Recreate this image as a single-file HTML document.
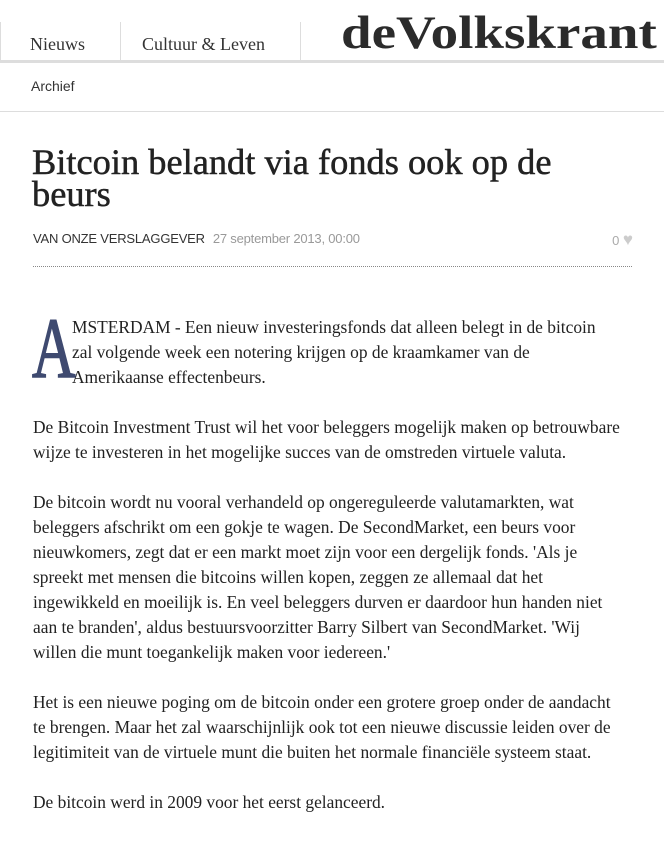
<!DOCTYPE html>
<html><head><meta charset="utf-8"><style>
*{margin:0;padding:0;box-sizing:border-box}
body{width:664px;height:866px;background:#fff;font-family:"Liberation Serif",serif;color:#222;position:relative;overflow:hidden}
.nav{position:absolute;top:22px;left:0;width:664px;height:41px;border-bottom:3px solid #ddd}
.nav .item{position:absolute;top:0;height:38px;border-left:1px solid #ddd;font-size:18px;line-height:44px;color:#333}
.logo{position:absolute;left:341px;top:-9px;font-size:47px;font-weight:bold;color:#2b2b2b;line-height:40px;white-space:nowrap;transform-origin:0 0;transform:scaleX(1.17)}
.sub{position:absolute;top:63px;left:0;width:664px;height:49px;border-bottom:1px solid #ddd;font-family:"Liberation Sans",sans-serif;font-size:14px;color:#333;padding-left:31px;line-height:46px}
h1{position:absolute;left:32px;top:146px;font-size:36.4px;font-weight:normal;line-height:32px;color:#222;-webkit-text-stroke:.5px #222;white-space:nowrap}
.by{position:absolute;left:33px;top:231px;font-family:"Liberation Sans",sans-serif;font-size:13px;color:#333;white-space:nowrap;letter-spacing:-.2px}
.by span{color:#999;margin-left:8px}
.likes{position:absolute;right:31px;top:230px;font-family:"Liberation Sans",sans-serif;font-size:13px;color:#aaa}
.dots{position:absolute;left:33px;top:266px;width:599px;border-top:1px dotted #888}
.body{position:absolute;left:33px;top:315px;font-size:17.4px;line-height:25px;color:#222;white-space:nowrap}
.body p{margin-bottom:25px}
.cap{position:absolute;left:-1px;top:-2px;font-size:86px;line-height:70px;color:#3f4a70;transform-origin:0 0;transform:scaleX(0.7);-webkit-text-stroke:1.5px #3f4a70}
</style></head><body>
<div class="nav">
<div class="item" style="left:0;width:120px;padding-left:29px">Nieuws</div>
<div class="item" style="left:120px;width:116px;padding-left:21px;white-space:nowrap">Cultuur &amp; Leven</div>
<div class="item" style="left:300px;width:1px"></div>
<div class="logo">deVolkskrant</div>
</div>
<div class="sub">Archief</div>
<h1>Bitcoin belandt via fonds ook op de<br>beurs</h1>
<div class="by">VAN ONZE VERSLAGGEVER<span>27 september 2013, 00:00</span></div>
<div class="likes">0 <span style="color:#ccc;font-size:17px">♥</span></div>
<div class="dots"></div>
<div class="body">
<div class="cap">A</div>
<p style="padding-left:39px">MSTERDAM - Een nieuw investeringsfonds dat alleen belegt in de bitcoin<br>zal volgende week een notering krijgen op de kraamkamer van de<br>Amerikaanse effectenbeurs.</p>
<p>De Bitcoin Investment Trust wil het voor beleggers mogelijk maken op betrouwbare<br>wijze te investeren in het mogelijke succes van de omstreden virtuele valuta.</p>
<p>De bitcoin wordt nu vooral verhandeld op ongereguleerde valutamarkten, wat<br>beleggers afschrikt om een gokje te wagen. De SecondMarket, een beurs voor<br>nieuwkomers, zegt dat er een markt moet zijn voor een dergelijk fonds. 'Als je<br>spreekt met mensen die bitcoins willen kopen, zeggen ze allemaal dat het<br>ingewikkeld en moeilijk is. En veel beleggers durven er daardoor hun handen niet<br>aan te branden', aldus bestuursvoorzitter Barry Silbert van SecondMarket. 'Wij<br>willen die munt toegankelijk maken voor iedereen.'</p>
<p>Het is een nieuwe poging om de bitcoin onder een grotere groep onder de aandacht<br>te brengen. Maar het zal waarschijnlijk ook tot een nieuwe discussie leiden over de<br>legitimiteit van de virtuele munt die buiten het normale financiële systeem staat.</p>
<p>De bitcoin werd in 2009 voor het eerst gelanceerd.</p>
</div>
</body></html>
